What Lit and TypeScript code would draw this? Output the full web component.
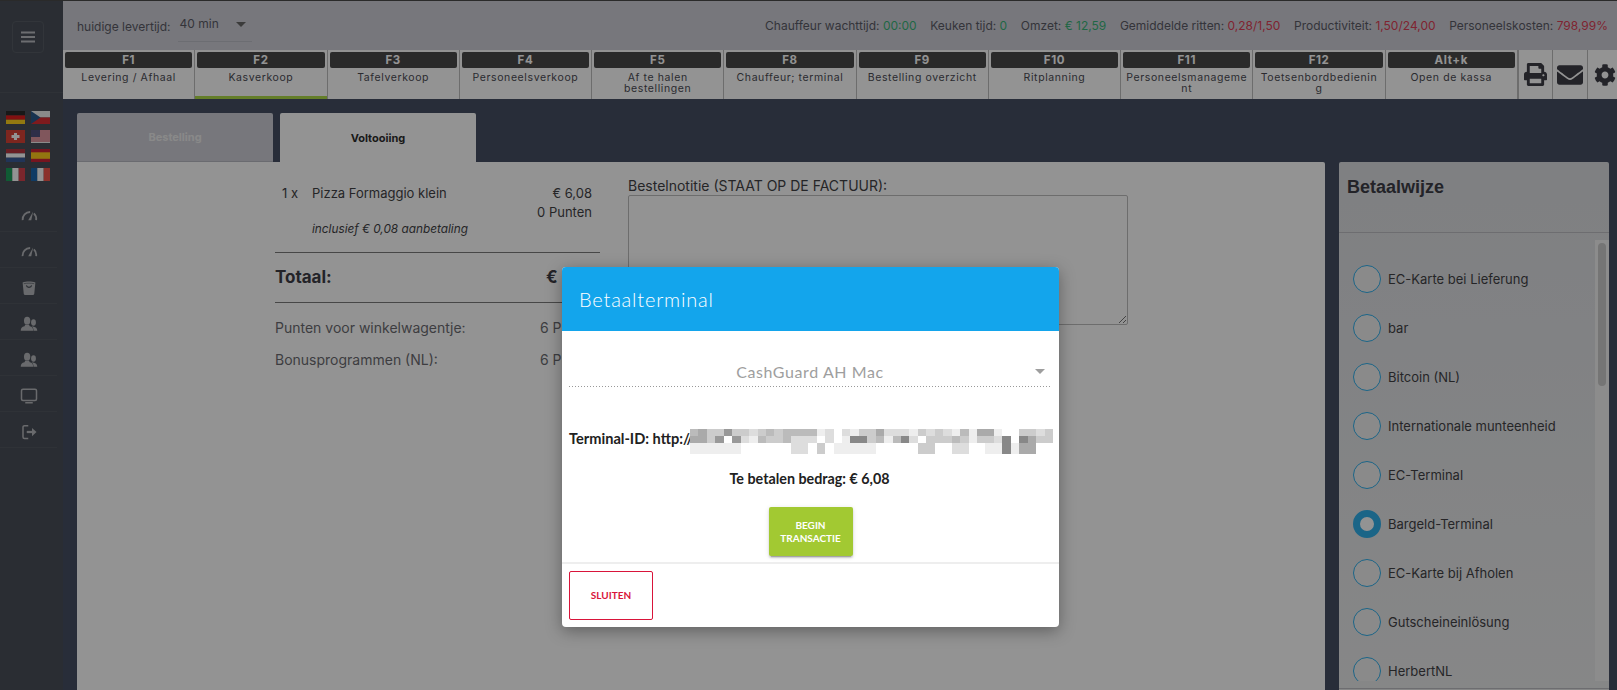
import { LitElement, html, css, svg } from "lit";
import { customElement } from "lit/decorators.js";

const TABS = [
  ["F1", "Levering / Afhaal"], ["F2", "Kasverkoop"], ["F3", "Tafelverkoop"], ["F4", "Personeelsverkoop"],
  ["F5", "Af te halen bestellingen"], ["F8", "Chauffeur; terminal"], ["F9", "Bestelling overzicht"], ["F10", "Ritplanning"],
  ["F11", "Personeelsmanagement"], ["F12", "Toetsenbordbediening"], ["Alt+k", "Open de kassa"],
];
const METHODS = ["EC-Karte bei Lieferung", "bar", "Bitcoin (NL)", "Internationale munteenheid", "EC-Terminal", "Bargeld-Terminal", "EC-Karte bij Afholen", "Gutscheineinlösung", "HerbertNL"];
const MOSAIC = [
  [4,5,3,3,6,3,3,2,3,4,3,4,4,4,4,1,2,0,2,1,3,3,5,2,2,2,1,3,2,3,2,1,4,1,5,5,1,0,0,3,3,2,3],
  [5,5,3,6,0,6,2,1,4,3,3,4,2,2,2,0,2,0,1,7,7,3,4,1,4,7,2,0,3,3,3,4,3,1,3,3,2,7,0,7,5,3,3],
  [1,1,1,1,1,1,0,0,0,0,0,0,2,2,0,3,0,1,1,1,1,1,0,0,0,0,0,3,3,0,0,2,2,0,0,1,1,7,1,5,5,0,0],
];

const gauge = svg`<path d="M3.500 17.500A10 10 0 0 1 13.500 6.700" fill="none" stroke="currentColor" stroke-width="2.400"/><path d="M18.500 8.500A10 10 0 0 1 21.500 17.500" fill="none" stroke="currentColor" stroke-width="2.400"/><path d="M11 17.500L17.500 6 15 17.500z" fill="currentColor"/>`;
const bag = svg`<path d="M3.500 4.500C8 3 16 3 20.500 4.500l-1.500 15a2 2 0 0 1-2 1.800H7a2 2 0 0 1-2-1.800z" fill="currentColor"/><path d="M8.500 8.500c.5 3.500 6.500 3.500 7 0" fill="none" stroke="#343a44" stroke-width="1.500"/><path d="M5 6.300c4-1 10-1 14 0" fill="none" stroke="#343a44" stroke-width=".8"/>`;
const users = svg`<ellipse cx="18" cy="10" rx="3.200" ry="4.200" fill="currentColor"/><path d="M18.500 15.500c2.800.7 4.500 2 4.500 5.500h-5c0-3-.8-4.800-2.500-6z" fill="currentColor"/><ellipse cx="9.500" cy="7.500" rx="4.200" ry="5.200" fill="currentColor"/><path d="M1 21c0-4 1.500-5 5-6l1-2h5l1 2c3.500 1 4.500 2 4.500 6z" fill="currentColor"/>`;
const monitor = svg`<rect x="2" y="3" width="20" height="15" rx="2" fill="none" stroke="currentColor" stroke-width="2"/><path d="M7 21h10" stroke="currentColor" stroke-width="2"/>`;
const logout = svg`<path d="M11 3.500H6a2 2 0 0 0-2 2v13a2 2 0 0 0 2 2h5" fill="none" stroke="currentColor" stroke-width="2"/><path d="M9 12h8" stroke="currentColor" stroke-width="3"/><path d="M16 6.500l6 5.500-6 5.500z" fill="currentColor"/>`;
const SIDE = [gauge, gauge, bag, users, users, monitor, logout];

const flags = [
  svg`<rect width="19" height="4.400" fill="#111"/><rect y="4.400" width="19" height="4.300" fill="#d00"/><rect y="8.700" width="19" height="4.300" fill="#fc0"/>`,
  svg`<rect width="19" height="6.500" fill="#eee"/><rect y="6.500" width="19" height="6.500" fill="#d7141a"/><path d="M0 0l9.500 6.500L0 13z" fill="#11457e"/>`,
  svg`<rect width="19" height="13" fill="#d52b1e"/><path d="M8 3h3v2h2.500v3H11v2H8V8H5.500V5H8z" fill="#fff"/>`,
  svg`<rect width="19" height="13" fill="#eee"/><path d="M0 1h19M0 3h19M0 5h19M0 7h19M0 9h19M0 11h19" stroke="#c8233c" stroke-width="1"/><rect y="0" width="9" height="7" fill="#3c3b6e"/>`,
  svg`<rect width="19" height="4.400" fill="#ae1c28"/><rect y="4.400" width="19" height="4.300" fill="#fff"/><rect y="8.700" width="19" height="4.300" fill="#21468b"/>`,
  svg`<rect width="19" height="13" fill="#c60b1e"/><rect y="3.300" width="19" height="6.500" fill="#ffc400"/>`,
  svg`<rect width="6.300" height="13" fill="#009246"/><rect x="6.300" width="6.400" height="13" fill="#fff"/><rect x="12.700" width="6.300" height="13" fill="#ce2b37"/>`,
  svg`<rect width="6.300" height="13" fill="#0055a4"/><rect x="6.300" width="6.400" height="13" fill="#fff"/><rect x="12.700" width="6.300" height="13" fill="#ef4135"/>`,
];

const PRINT = "M448 192V77.25c0-8.49-3.37-16.62-9.37-22.63L393.37 9.37c-6-6-14.14-9.37-22.63-9.37H96C78.33 0 64 14.33 64 32v160c-35.35 0-64 28.65-64 64v112c0 8.84 7.16 16 16 16h48v96c0 17.67 14.33 32 32 32h320c17.67 0 32-14.33 32-32v-96h48c8.84 0 16-7.16 16-16V256c0-35.35-28.65-64-64-64zm-64 256H128v-96h256v96zm0-224H128V64h192v48c0 8.84 7.16 16 16 16h48v96zm48 72c-13.25 0-24-10.75-24-24 0-13.26 10.75-24 24-24s24 10.74 24 24c0 13.25-10.75 24-24 24z";
const MAIL = "M502.3 190.8c3.9-3.1 9.7-.2 9.7 4.7V400c0 26.5-21.5 48-48 48H48c-26.5 0-48-21.5-48-48V195.6c0-5 5.7-7.8 9.7-4.7 22.4 17.4 52.1 39.5 154.1 113.6 21.1 15.4 56.7 47.8 92.2 47.6 35.7.3 72-32.8 92.3-47.6 102-74.1 131.6-96.3 154-113.7zM256 320c23.2.4 56.6-29.2 73.4-41.4 132.7-96.3 142.8-104.7 173.4-128.7 5.8-4.5 9.2-11.5 9.2-18.9v-19c0-26.5-21.5-48-48-48H48C21.5 64 0 85.5 0 112v19c0 7.4 3.4 14.3 9.2 18.9 30.6 23.9 40.7 32.4 173.4 128.7 16.8 12.2 50.2 41.8 73.4 41.4z";
const COG = "M487.4 315.7l-42.6-24.6c4.3-23.2 4.3-47 0-70.2l42.6-24.6c4.9-2.8 7.1-8.6 5.500-14-11.1-35.6-30-67.8-54.7-94.6-3.8-4.1-10-5.1-14.8-2.3L380.8 110c-17.9-15.4-38.5-27.3-60.8-35.1V25.8c0-5.6-3.9-10.500-9.4-11.7-36.7-8.2-74.3-7.8-109.2 0-5.5 1.2-9.4 6.1-9.4 11.7V75c-22.2 7.9-42.8 19.8-60.8 35.1L88.7 85.5c-4.9-2.8-11-1.9-14.8 2.3-24.7 26.7-43.6 58.9-54.7 94.6-1.7 5.4.6 11.2 5.5 14L67.3 221c-4.3 23.2-4.3 47 0 70.2l-42.6 24.6c-4.9 2.8-7.1 8.6-5.5 14 11.1 35.6 30 67.8 54.7 94.6 3.8 4.1 10 5.1 14.8 2.3l42.6-24.6c17.9 15.4 38.5 27.3 60.8 35.1v49.2c0 5.6 3.9 10.5 9.4 11.7 36.7 8.2 74.3 7.8 109.2 0 5.5-1.2 9.4-6.1 9.4-11.7v-49.2c22.2-7.9 42.8-19.8 60.8-35.1l42.6 24.6c4.9 2.8 11 1.9 14.8-2.3 24.7-26.7 43.6-58.9 54.7-94.6 1.5-5.5-.7-11.3-5.6-14.1zM256 336c-44.1 0-80-35.9-80-80s35.9-80 80-80 80 35.9 80 80-35.9 80-80 80z";

@customElement("app-root")
export class AppRoot extends LitElement {
  static styles = css`
    :host { display: block; position: relative; width: 100%; height: 690px; overflow: hidden; background: #2f3a50; font-family: Inter, "Liberation Sans", sans-serif; color: #25252f; }
    * { box-sizing: border-box; }
    .app { display: flex; height: 690px; border-top: 1px solid #333; }
    .side { width: 63px; flex: none; background: #343a44; display: flex; flex-direction: column; color: #aeb0b5; }
    .burger-wrap { height: 92px; border-bottom: 1px solid #3d434d; padding: 20px 0 0 12px; }
    .burger { width: 32px; height: 32px; border: 1px solid #424853; border-radius: 4px; display: flex; align-items: center; justify-content: center; color: #b4b6bb; }
    .flags { display: grid; grid-template-columns: 19px 19px; gap: 6px 6px; padding: 18px 0 0 6px; height: 103px; align-content: start; }
    .flags svg { display: block; }
    .side-row { height: 36px; width: 57px; border-bottom: 1px solid #3d434d; padding-top: 4px; display: flex; align-items: center; justify-content: center; }
    .main { flex: 1; min-width: 0; display: flex; flex-direction: column; }
    .top { height: 49px; flex: none; background: #c8c9d2; display: flex; align-items: center; justify-content: space-between; padding: 0 9px 1px 14px; font-size: 12px; color: #474752; }
    .lever { display: flex; align-items: center; gap: 7px; padding-top: 3px; }
    .sel { width: 74px; height: 28px; margin-top: 3px; border-bottom: 1px solid #b4b5bf; display: flex; justify-content: space-between; padding: 2px 6px 0 2px; font-size: 12px; align-items: flex-start; line-height: 16px; }
    .caret { width: 0; height: 0; border-left: 5px solid transparent; border-right: 5px solid transparent; border-top: 5px solid #555; margin-top: 6px; }
    .stats { display: flex; gap: 13.600px; }
    .g { color: #1faa68; }
    .r { color: #d92640; }
    .tabs { height: 49px; flex: none; display: flex; background: #fff; }
    .tab { width: 132.270px; flex: none; border-right: 1px solid #b5b5b5; padding: 2px 2px 0; text-align: center; position: relative; }
    .tab.on { box-shadow: inset 0 -3px 0 #a4d632; }
    .key { height: 16px; line-height: 16px; background: #343434; color: #fff; font-weight: 700; font-size: 11.500px; letter-spacing: .6px; border-radius: 2px; }
    .lab { font-size: 10.500px; letter-spacing: .6px; line-height: 11px; margin-top: 4px; color: #33333d; overflow-wrap: anywhere; padding: 0 2px; }
    .itab { width: 35px; flex: none; border-left: 1px solid #b5b5b5; display: flex; align-items: center; justify-content: center; color: #25252f; }
    .itab.first { border-left-width: 2px; margin-left: -1px; }
    .content { flex: 1; min-height: 0; padding: 14px 8px 0 14px; display: flex; flex-direction: column; }
    .ptabs { display: flex; gap: 7px; height: 49px; flex: none; }
    .ptab { width: 196px; border-radius: 2px 2px 0 0; display: flex; align-items: center; justify-content: center; font-size: 11px; font-weight: 700; }
    .ptab.off { background: #c8c9d2; color: #ececec; border-bottom: 1px solid #b0b2bc; }
    .ptab.act { background: #fff; color: #111; }
    .panels { flex: 1; min-height: 0; display: flex; gap: 14px; }
    .panel { flex: 1; min-width: 0; background: #fff; padding: 16px 0 0 198px; display: flex; gap: 28px; border-radius: 0 2px 0 0; }
    .order { width: 325px; flex: none; }
    .item { display: flex; padding: 5.500px 8px 0 7px; height: 74.500px; border-bottom: 1px solid #6b6b6b; font-size: 13px; line-height: 19px; color: #2a2a2e; }
    .qty { width: 30px; flex: none; }
    .name { flex: 1; }
    .incl { font-size: 11.800px; font-style: italic; margin-top: 17px; line-height: 18px; }
    .price { text-align: right; }
    .total { display: flex; justify-content: space-between; align-items: center; height: 50px; border-bottom: 1px solid #6b6b6b; font-size: 17px; font-weight: 700; }
    .pts { display: flex; justify-content: space-between; height: 32px; align-items: center; font-size: 14px; color: #595960; padding-right: 1px; }
    .pts.first { margin-top: 9px; }
    .note { width: 500px; flex: none; }
    .note label { display: block; font-size: 14px; line-height: 16px; color: #2a2a2e; margin-bottom: 1px; }
    textarea { display: block; width: 500px; height: 130px; border: 1px solid #b5b5b5; border-radius: 2px; background: #fff; margin: 0; }
    .right { width: 270px; flex: none; background: linear-gradient(#d8dade, #e6e7e8); border-radius: 2px 2px 0 0; }
    .rhead { height: 71px; border-bottom: 1px solid #b5b5bb; padding: 14px 0 0 8px; font-family: "Liberation Sans", Arial, sans-serif; font-size: 18px; line-height: 22px; font-weight: 700; }
    .rbody { display: flex; margin-top: 7px; height: 441px; }
    .list { flex: 1; overflow: hidden; padding-top: 14px; min-width: 0; }
    .m { height: 49px; display: flex; align-items: center; padding-left: 14px; gap: 7px; font-size: 13px; color: #2a2a2e; }
    .radio { width: 28px; height: 28px; border-radius: 50%; border: 1px solid #16a5e8; background: #eeeeee; flex: none; }
    .radio.on { border: 7px solid #16a5e8; background: #fff; }
    .track { width: 14px; flex: none; background: #f2f2f2; padding: 3px; }
    .thumb { height: 143px; background: #c4c4c4; border-radius: 4px; }
    .rfoot { margin-top: 7px; border-top: 1px solid #b5b5bb; }
    .scrim { position: absolute; inset: 0; background: rgba(33, 33, 33, .485); }
    .modal { position: absolute; left: 562px; top: 267px; width: 497px; height: 360px; background: #fff; border-radius: 4px; overflow: hidden; box-shadow: 0 4px 16px rgba(0,0,0,.35); font-family: Lato, "Noto Sans", sans-serif; color: #212121; }
    .mhead { height: 64px; background: #13a5ec; color: #fff; display: flex; align-items: center; padding-left: 17px; font-size: 20px; font-weight: 300; letter-spacing: .8px; }
    .mbody { height: 233px; border-bottom: 2px solid #eee; padding: 0 7px; display: flex; flex-direction: column; }
    .msel { height: 36px; margin-top: 20px; flex: none; background: repeating-linear-gradient(90deg, #999 0 1px, transparent 1px 3px) bottom / 100% 1px no-repeat; display: flex; align-items: center; justify-content: space-between; padding: 5px 7px 0 0; color: #9e9e9e; font-size: 16px; letter-spacing: .6px; }
    .msel span { flex: 1; text-align: center; padding-left: 16px; }
    .msel .caret { border-top-color: #9e9e9e; margin: 0; }
    .tid { position: relative; margin-top: 42px; height: 20px; line-height: 20px; font-size: 14.600px; font-weight: 700; white-space: nowrap; }
    .mosaic { position: absolute; left: 121px; top: 0; width: 363px; height: 25px; display: grid; grid-template-columns: repeat(43, 1fr); grid-template-rows: 7px 7px 11px; background: #fff; }
    .amount { text-align: center; margin-top: 20px; height: 20px; line-height: 20px; font-size: 14.300px; font-weight: 700; padding-right: 2px; }
    .begin { align-self: center; width: 84px; height: 49px; margin: 18px 0 0; border: 0; padding: 0 10px; border-radius: 2px; background: #a2c932; color: #fff; font: 700 10px/13px Lato, "Noto Sans", sans-serif; box-shadow: 0 3px 1px -2px rgba(0,0,0,.2), 0 2px 2px 0 rgba(0,0,0,.14), 0 1px 5px 0 rgba(0,0,0,.12); }
    .mfoot { padding: 7px 7px 5px; }
    .close { width: 84px; height: 49px; background: #fff; border: 1px solid #d9143a; border-radius: 2px; color: #d9143a; font: 700 10px/13px Lato, "Noto Sans", sans-serif; padding: 0; }
  `;

  render() {
    return html`
      <div class="app">
        <aside class="side">
          <div class="burger-wrap"><div class="burger">
            <svg width="14" height="12" viewBox="0 0 14 12"><path d="M0 1.500h14M0 6h14M0 10.500h14" stroke="currentColor" stroke-width="2"/></svg>
          </div></div>
          <div class="flags">${flags.map((f) => html`<svg width="19" height="13" viewBox="0 0 19 13">${f}</svg>`)}</div>
          ${SIDE.map((i) => html`<div class="side-row"><svg width="18" height="18" viewBox="0 0 24 24">${i}</svg></div>`)}
        </aside>
        <div class="main">
          <header class="top">
            <div class="lever"><span>huidige levertijd:</span><div class="sel"><span>40 min</span><i class="caret"></i></div></div>
            <div class="stats">
              <span>Chauffeur wachttijd: <span class="g">00:00</span></span>
              <span>Keuken tijd: <span class="g">0</span></span>
              <span>Omzet: <span class="g">€ 12,59</span></span>
              <span>Gemiddelde ritten: <span class="r">0,28/1,50</span></span>
              <span>Productiviteit: <span class="r">1,50/24,00</span></span>
              <span>Personeelskosten: <span class="r">798,99%</span></span>
            </div>
          </header>
          <nav class="tabs">
            ${TABS.map(([k, l], i) => html`<div class="tab ${i === 1 ? "on" : ""}"><div class="key">${k}</div><div class="lab">${l}</div></div>`)}
            <div class="itab first"><svg width="23" height="23" viewBox="0 0 512 512"><path fill="currentColor" d=${PRINT}></path></svg></div>
            <div class="itab"><svg width="26" height="26" viewBox="0 0 512 512"><path fill="currentColor" d=${MAIL}></path></svg></div>
            <div class="itab"><svg width="22" height="22" viewBox="0 0 512 512"><path fill="currentColor" d=${COG}></path></svg></div>
          </nav>
          <div class="content">
            <div class="ptabs"><div class="ptab off">Bestelling</div><div class="ptab act">Voltooiing</div></div>
            <div class="panels">
              <section class="panel">
                <div class="order">
                  <div class="item">
                    <span class="qty">1 x</span>
                    <div class="name">Pizza Formaggio klein<div class="incl">inclusief € 0,08 aanbetaling</div></div>
                    <div class="price">€ 6,08<br />0 Punten</div>
                  </div>
                  <div class="total"><span>Totaal:</span><span>€ 6,08</span></div>
                  <div class="pts first"><span>Punten voor winkelwagentje:</span><span>6 Punten</span></div>
                  <div class="pts"><span>Bonusprogrammen (NL):</span><span>6 Punten</span></div>
                </div>
                <div class="note"><label>Bestelnotitie (STAAT OP DE FACTUUR):</label><textarea></textarea></div>
              </section>
              <aside class="right">
                <div class="rhead">Betaalwijze</div>
                <div class="rbody">
                  <div class="list">${METHODS.map((m, i) => html`<div class="m"><i class="radio ${i === 5 ? "on" : ""}"></i><span>${m}</span></div>`)}</div>
                  <div class="track"><div class="thumb"></div></div>
                </div>
                <div class="rfoot"></div>
              </aside>
            </div>
          </div>
        </div>
      </div>
      <div class="scrim"></div>
      <div class="modal">
        <div class="mhead">Betaalterminal</div>
        <div class="mbody">
          <div class="msel"><span>CashGuard AH Mac</span><i class="caret"></i></div>
          <div class="tid">Terminal-ID: http://
            <div class="mosaic">${MOSAIC.flatMap((r) => r.map((v) => html`<i style="background:rgb(${255 - v * 17},${255 - v * 17},${255 - v * 17})"></i>`))}</div>
          </div>
          <div class="amount">Te betalen bedrag: € 6,08</div>
          <button class="begin">BEGIN TRANSACTIE</button>
        </div>
        <div class="mfoot"><button class="close">SLUITEN</button></div>
      </div>
    `;
  }
}
